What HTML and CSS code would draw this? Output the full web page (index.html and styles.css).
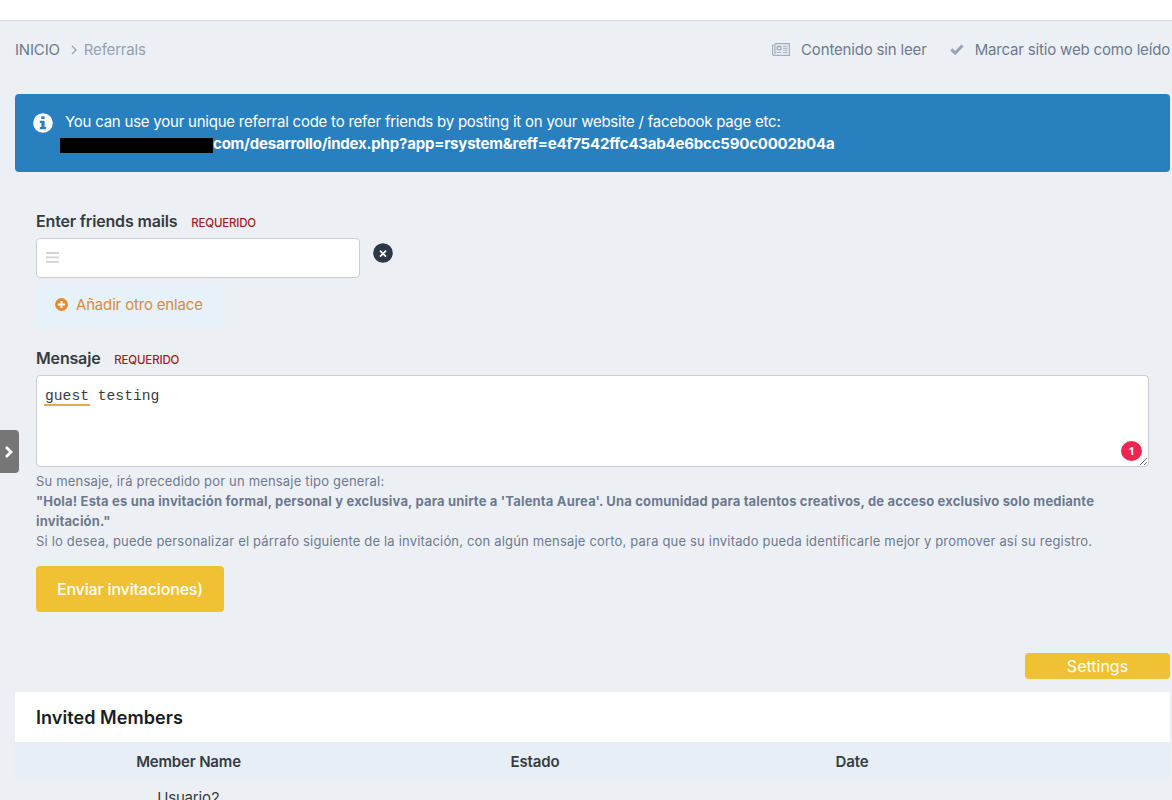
FILE: index.html
```html
<!DOCTYPE html>
<html lang="es">
<head>
  <meta charset="UTF-8">
  <meta name="viewport" content="width=device-width, initial-scale=1.0">
  <title>Referrals</title>
  <link rel="stylesheet" href="styles.css">
</head>
<body>
  <header class="topbar"></header>

  <button class="drawer" type="button" aria-label="Abrir panel">
    <svg width="10" height="14" viewBox="0 0 10 14"><path d="M2 2l5 5-5 5" fill="none" stroke="#fff" stroke-width="2.8"/></svg>
  </button>

  <main class="page">
    <nav class="crumbs">
      <a class="home" href="#">INICIO</a>
      <svg class="sep" width="6" height="10" viewBox="0 0 6 10"><path d="M1 1l4 4-4 4" fill="none" stroke="#98a2b3" stroke-width="1.3"/></svg>
      <span class="current">Referrals</span>
      <ul class="streams">
        <li>
          <svg width="18" height="13" viewBox="0 0 18 13">
            <path d="M3 .6h14.4v11.8H2A1.4 1.4 0 0 1 .6 11V2H3v9" fill="none" stroke="#a3adbd" stroke-width="1.2"/>
            <path d="M5.3 3.5h3.6v3.4H5.3z" fill="none" stroke="#a3adbd" stroke-width="1.4"/>
            <path d="M11 3.2h4.7M11 5.2h4.7M11 7.2h4.7M4.6 9.5h4.8M11 9.5h4.7" stroke="#a3adbd" stroke-width="1.1"/>
          </svg>
          <a href="#">Contenido sin leer</a>
        </li>
        <li>
          <svg width="14" height="11" viewBox="0 0 14 11"><path d="M1.3 5.4l3.9 3.7 7.3-7.6" fill="none" stroke="#98a3b5" stroke-width="3"/></svg>
          <a href="#">Marcar sitio web como leído</a>
        </li>
      </ul>
    </nav>

    <div class="message">
      <svg class="info" width="20" height="20" viewBox="0 0 20 20">
        <circle cx="10" cy="10" r="9.8" fill="#fff"/>
        <path d="M8.4 3.2h3.2v2.8H8.4zM6.8 7.7h4.8v6.2h1.5v2.3H6.8v-2.3h1.6v-3.8H6.8z" fill="#2980bf"/>
      </svg>
      <p class="intro">You can use your unique referral code to refer friends by posting it on your website / facebook page etc:</p>
      <p class="link"><span class="redacted"></span><strong>com/desarrollo/index.php?app=rsystem&amp;reff=e4f7542ffc43ab4e6bcc590c0002b04a</strong></p>
    </div>

    <form class="invite">
      <div class="label">Enter friends mails <span class="required">REQUERIDO</span></div>
      <div class="mail-row">
        <div class="mail">
          <svg width="13" height="11" viewBox="0 0 13 11"><path d="M0 1h13M0 5.4h13M0 9.8h13" stroke="#d2d2d2" stroke-width="1.8"/></svg>
          <input type="text" aria-label="Enter friends mails">
        </div>
        <button class="remove" type="button" aria-label="Eliminar">
          <svg width="20" height="20" viewBox="0 0 20 20"><circle cx="10" cy="10" r="9.8" fill="#2d374a"/><path d="M7 7.7l6 6M13 7.7l-6 6" stroke="#fff" stroke-width="1.7"/></svg>
        </button>
      </div>
      <button class="add" type="button">
        <svg width="13" height="13" viewBox="0 0 13 13"><circle cx="6.5" cy="6.5" r="6.4" fill="#e38b31"/><path d="M6.5 3v7M3 6.5h7" stroke="#fff" stroke-width="2"/></svg>
        Añadir otro enlace
      </button>

      <div class="label">Mensaje <span class="required">REQUERIDO</span></div>
      <div class="editor">
        <textarea class="text" spellcheck="false" aria-label="Mensaje">guest testing</textarea>
        <span class="spelling"></span>
        <span class="errors">1</span>
      </div>
      <div class="help">
        Su mensaje, irá precedido por un mensaje tipo general:<br>
        <strong>"Hola! Esta es una invitación formal, personal y exclusiva, para unirte a 'Talenta Aurea'. Una comunidad para talentos creativos, de acceso exclusivo solo mediante<br>invitación."</strong><br>
        <span class="note">Si lo desea, puede personalizar el párrafo siguiente de la invitación, con algún mensaje corto, para que su invitado pueda identificarle mejor y promover así su registro.</span>
      </div>
      <button class="submit" type="button">Enviar invitaciones)</button>
    </form>

    <div class="tools">
      <a class="settings" href="#">Settings</a>
    </div>

    <section class="members">
      <h2>Invited Members</h2>
      <table>
        <thead>
          <tr>
            <th class="name">Member Name</th>
            <th class="state">Estado</th>
            <th class="date">Date</th>
            <th></th>
          </tr>
        </thead>
        <tbody>
          <tr>
            <td>Usuario2</td>
            <td></td>
            <td></td>
            <td></td>
          </tr>
        </tbody>
      </table>
    </section>
  </main>
</body>
</html>
```

FILE: styles.css
```css
* {
  box-sizing: border-box;
}
body {
  margin: 0;
  height: 800px;
  overflow: hidden;
  background: #ecf0f5;
  color: #353c41;
  font-family: Inter, "Liberation Sans", sans-serif;
  font-size: 15px;
  letter-spacing: -0.17px;
}
a {
  color: inherit;
  text-decoration: none;
}
p {
  margin: 0;
}
svg {
  display: block;
  flex: none;
}
button {
  border: 0;
  padding: 0;
  background: none;
  font: inherit;
  letter-spacing: inherit;
}
.topbar {
  height: 21px;
  background: #fff;
  border-bottom: 1px solid #d9dce1;
}
.page {
  padding: 0 2px 0 15px;
}

/* side drawer handle, floats over the page */
.drawer {
  position: absolute;
  left: 0;
  top: 430px;
  width: 19px;
  height: 43px;
  padding-left: 4px;
  border-radius: 0 4px 4px 0;
  background: #767676;
}

.crumbs {
  display: flex;
  align-items: center;
  height: 57px;
  color: #6b7a90;
  white-space: nowrap;
}
.sep {
  margin: 0 7px 0 11px;
}
.current {
  color: #95a0b1;
}
.streams {
  display: flex;
  gap: 23px;
  margin: 0 0 0 auto;
  padding: 0;
  list-style: none;
}
.streams li {
  display: flex;
  align-items: center;
  gap: 11px;
}

.message {
  position: relative;
  height: 78px;
  margin-top: 16px;
  padding: 17px 0 0 45px;
  border-radius: 4px;
  background: #2980bf;
  color: #fff;
  line-height: 22px;
  letter-spacing: -0.23px;
}
.info {
  position: absolute;
  left: 17.5px;
  top: 18.5px;
}
.intro {
  padding-left: 5px;
}
.link {
  display: flex;
  align-items: center;
  letter-spacing: -0.2px;
}
.redacted {
  width: 153px;
  height: 15px;
  margin-top: 3px;
  background: #000;
}

.invite {
  padding: 39px 21px 0;
}
.label {
  font-size: 16px;
  font-weight: 600;
  line-height: 20px;
  height: 20px;
}
.required {
  margin-left: 10px;
  color: #a01c22;
  font-size: 11.5px;
  font-weight: 500;
}
.mail-row {
  display: flex;
  gap: 12.5px;
  margin-top: 7px;
}
.mail {
  display: flex;
  align-items: center;
  width: 324px;
  height: 40px;
  padding: 0 9px 2px;
  border: 1px solid #c7ccd8;
  border-radius: 4px;
  background: #fff;
}
.mail input {
  flex: 1;
  border: 0;
  outline: 0;
  background: none;
}
.remove {
  align-self: flex-start;
  margin-top: 5px;
}
.add {
  display: flex;
  align-items: center;
  gap: 8px;
  width: 186px;
  height: 42px;
  margin: 6px 0 22px;
  padding: 0 0 2px 19px;
  background: #e6f1fa;
  color: #da8b3d;
  white-space: nowrap;
}

.editor {
  position: relative;
  height: 92px;
  margin-top: 7px;
}
.text {
  display: block;
  width: 100%;
  height: 92px;
  margin: 0;
  padding: 10px 8px;
  border: 1px solid #c7ccd8;
  border-radius: 4px;
  outline: 0;
  background: #fff;
  color: #353c41;
  font: 14.67px/21px "Liberation Mono", monospace;
}
.spelling {
  position: absolute;
  left: 8px;
  top: 29px;
  width: 46px;
  height: 2px;
  background: #e5aa45;
}
.errors {
  position: absolute;
  right: 7px;
  bottom: 6px;
  width: 21px;
  height: 20px;
  border-radius: 50%;
  background: #ee264f;
  color: #fff;
  font: bold 11px/20px "Noto Sans", sans-serif;
  text-align: center;
}
.help {
  margin-top: 4px;
  color: #6c7a90;
  font-size: 13px;
  line-height: 20px;
  letter-spacing: 0.18px;
  white-space: nowrap;
}
.help strong {
  letter-spacing: 0.17px;
}
.submit {
  width: 188px;
  height: 46px;
  margin-top: 15px;
  border-radius: 4px;
  background: #f0c132;
  color: #fff;
  font-size: 16px;
  font-weight: 500;
}

.tools {
  display: flex;
  justify-content: flex-end;
  margin-top: 41px;
}
.settings {
  width: 145px;
  border-radius: 4px;
  background: #f0c132;
  color: #fff;
  font-size: 16px;
  line-height: 26px;
  letter-spacing: 0;
  text-align: center;
}

.members {
  margin-top: 13px;
}
.members h2 {
  margin: 0;
  padding: 1px 0 0 21px;
  background: #fff;
  color: #171d26;
  font-size: 18px;
  font-weight: 600;
  line-height: 49px;
  letter-spacing: 0.07px;
}
table {
  width: 100%;
  border-collapse: collapse;
  table-layout: fixed;
}
th, td {
  padding: 0;
  font-size: 15px;
  text-align: center;
}
th {
  height: 38px;
  background: #e7eef5;
  font-weight: 600;
}
td {
  height: 34px;
}
.name {
  width: 347px;
}
.state {
  width: 346px;
}
.date {
  width: 288px;
}
```
